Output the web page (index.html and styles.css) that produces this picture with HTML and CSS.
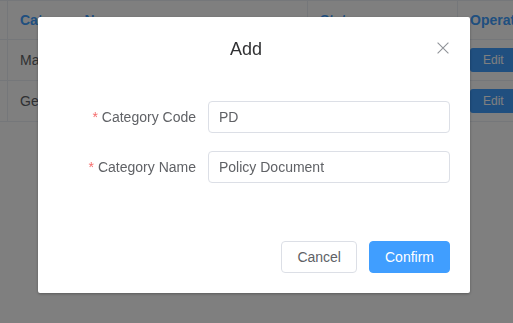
FILE: index.html
```html
<!DOCTYPE html>
<html>
<head>
	<meta charset="UTF-8">
	<title>Category</title>
	<link rel="stylesheet" href="styles.css">
</head>
<body>
	<table class="list">
		<thead>
			<tr>
				<th class="col-gap"></th>
				<th class="col-name">Category Name</th>
				<th class="col-status">Status</th>
				<th class="col-op">Operation</th>
			</tr>
		</thead>
		<tbody>
			<tr>
				<td class="col-gap"></td>
				<td>Management Rule</td>
				<td>Enabled</td>
				<td><button class="btn-edit">Edit</button></td>
			</tr>
			<tr>
				<td class="col-gap"></td>
				<td>General Document</td>
				<td>Enabled</td>
				<td><button class="btn-edit">Edit</button></td>
			</tr>
		</tbody>
	</table>

	<div class="mask">
		<div class="dialog">
			<div class="dialog-header">
				<span class="dialog-title">Add</span>
				<button class="dialog-close" aria-label="Close">
					<svg width="16" height="16" viewBox="0 0 16 16"><path d="M2.6 2.6 L13.4 13.4 M13.4 2.6 L2.6 13.4" stroke="#909399" stroke-width="1.1" fill="none"/></svg>
				</button>
			</div>
			<div class="dialog-body">
				<div class="form-item">
					<label class="form-label"><span class="req">*</span>Category Code</label>
					<input class="form-input" type="text" value="PD">
				</div>
				<div class="form-item">
					<label class="form-label"><span class="req">*</span>Category Name</label>
					<input class="form-input" type="text" value="Policy Document">
				</div>
			</div>
			<div class="dialog-footer">
				<button class="btn">Cancel</button>
				<button class="btn btn-primary">Confirm</button>
			</div>
		</div>
	</div>
</body>
</html>
```

FILE: styles.css
```css
body { margin: 0; font-family: "Liberation Sans", Arial, sans-serif; font-size: 14px; color: #606266; background: #fff; overflow: hidden; }

.list { border-collapse: collapse; table-layout: fixed; width: 600px; border-top: 1px solid #ebeef5; }
.list th, .list td { border-bottom: 1px solid #ebeef5; border-right: 1px solid #ebeef5; padding: 0 12px; text-align: left; white-space: nowrap; overflow: hidden; }
.list th { height: 38px; color: #409eff; font-weight: bold; }
.list td { height: 40px; }
.list .col-gap { width: 7px; padding: 0; }
.list .col-name { width: 275px; }
.list .col-status { width: 125px; }
.list .col-op { width: 140px; }

.btn-edit { height: 24px; padding: 0 13px; border: none; border-radius: 3px; background: #409eff; color: #fff; font-family: inherit; font-size: 12px; }

.mask { position: fixed; inset: 0; background: rgba(0, 0, 0, 0.5); }

.dialog { position: relative; width: 432px; margin: 17px 0 0 38px; background: #fff; border-radius: 2px; box-shadow: 0 1px 3px rgba(0, 0, 0, 0.3); }
.dialog-header { padding: 20px 36px 10px 20px; text-align: center; }
.dialog-title { display: block; font-size: 18px; line-height: 25px; color: #303133; }
.dialog-close { position: absolute; top: 23px; right: 19px; width: 16px; height: 16px; padding: 0; border: none; background: none; }
.dialog-close svg { display: block; }

.dialog-body { padding: 29px 20px 30px; }
.form-item { display: flex; align-items: center; margin-bottom: 18px; }
.form-label { width: 150px; padding-right: 12px; box-sizing: border-box; text-align: right; color: #606266; }
.req { color: #f56c6c; margin-right: 4px; }
.form-input { flex: 1; height: 32px; box-sizing: border-box; padding: 0 10px; border: 1px solid #dcdfe6; border-radius: 4px; font-family: inherit; font-size: 14px; color: #606266; outline: none; }

.dialog-footer { display: flex; justify-content: flex-end; gap: 12px; padding: 10px 20px 20px; }
.btn { height: 32px; padding: 0 15px; border: 1px solid #dcdfe6; border-radius: 4px; background: #fff; color: #606266; font-family: inherit; font-size: 14px; }
.btn-primary { background: #409eff; border-color: #409eff; color: #fff; }
```
